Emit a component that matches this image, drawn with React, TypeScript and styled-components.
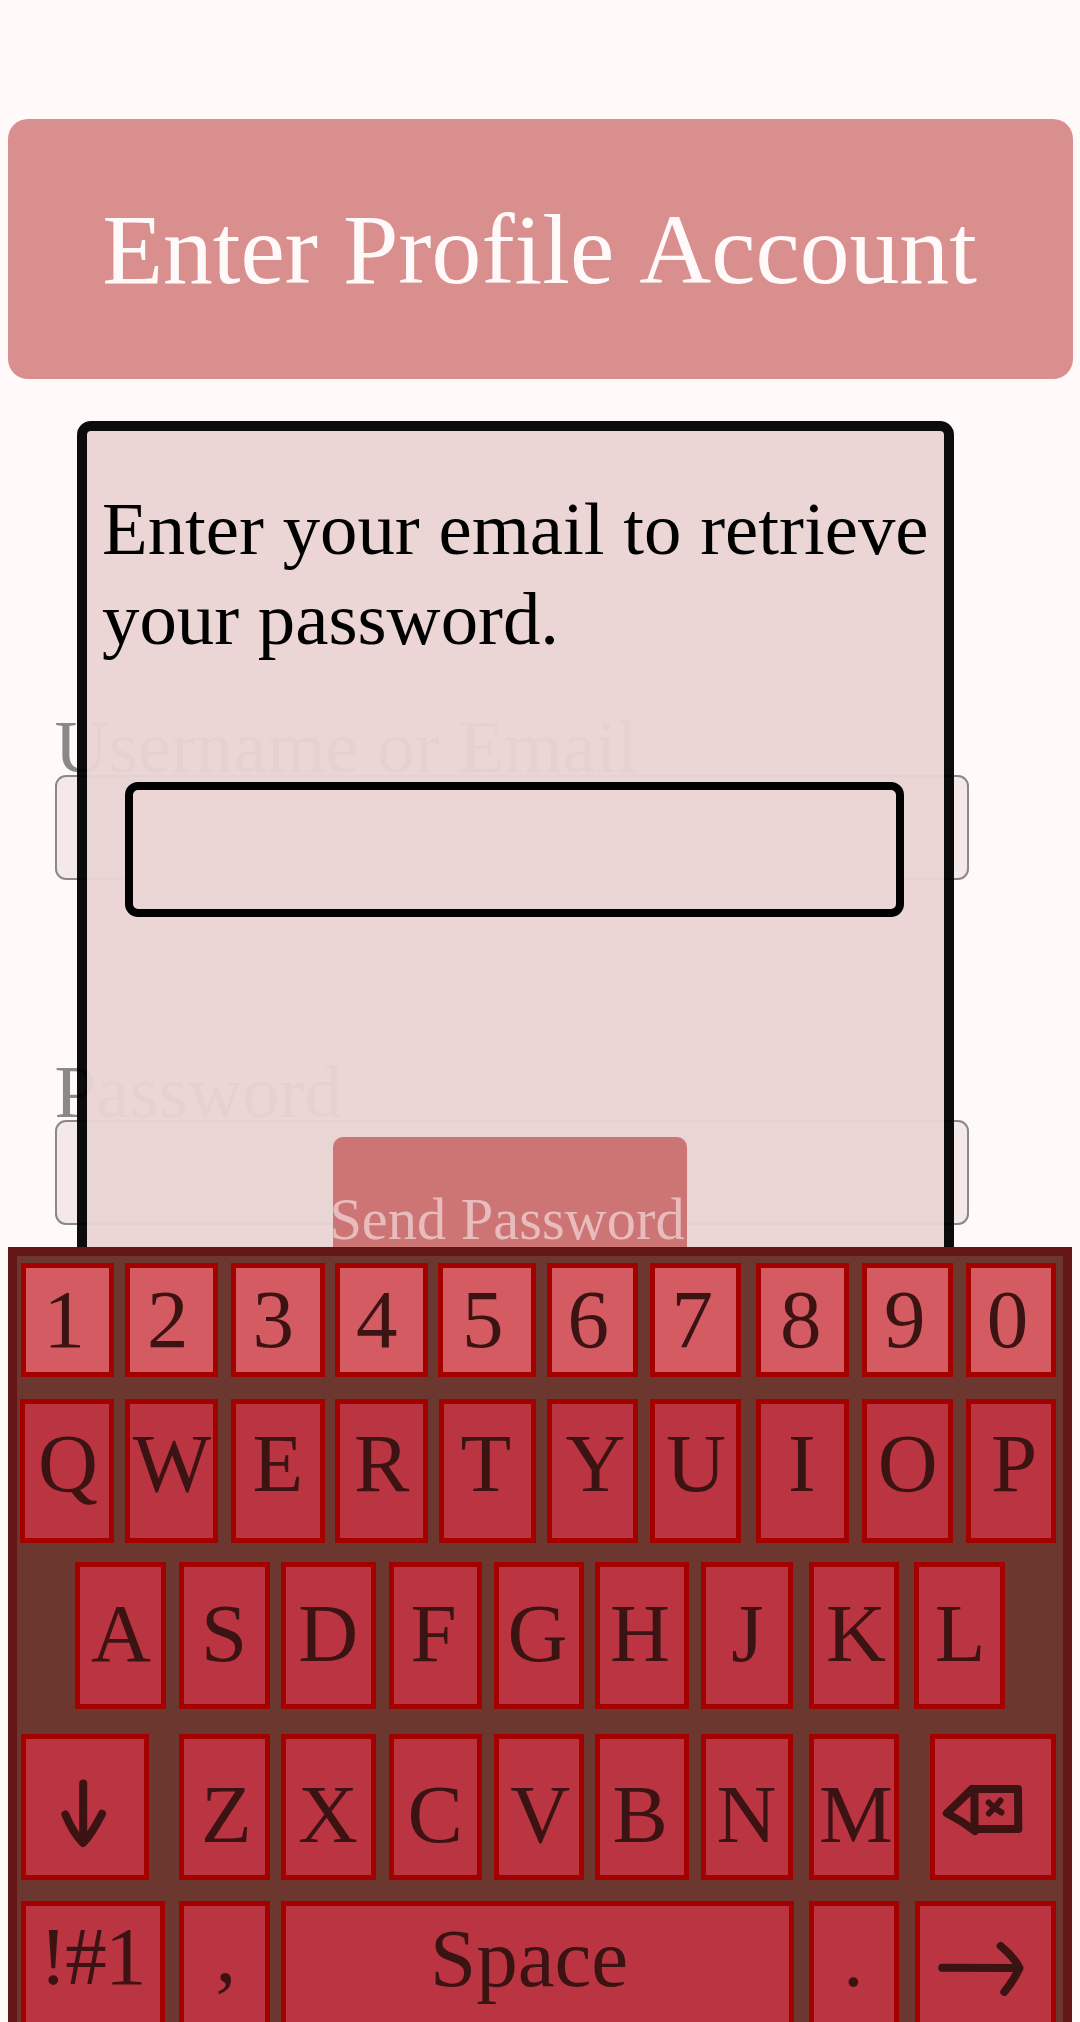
import React from "react";
import styled, { createGlobalStyle } from "styled-components";

const Global = createGlobalStyle`
  body { margin: 0; background: #fff9f9; }
  * { box-sizing: border-box; }
`;

const Screen = styled.div`
  position: relative;
  width: 1080px;
  height: 2022px;
  overflow: hidden;
  padding: 119px 7px 0 8px;
  background: #fff9f9;
  color: #000;
  font-family: "Liberation Serif", "Times New Roman", serif;
  font-kerning: none;
`;

const Header = styled.header`
  display: flex;
  justify-content: center;
  height: 260px;
  padding: 81px 2px 0 0;
  border-radius: 20px;
  background: #d98f8d;
`;

const Title = styled.h1`
  margin: 0;
  font-size: 99.7px;
  font-weight: 400;
  line-height: 100px;
  white-space: nowrap;
  color: #fff9f9;
  font-variant-ligatures: none;
`;

const Form = styled.form`
  display: flex;
  flex-direction: column;
  gap: 174px;
  padding: 330px 0 0 45px;
  opacity: 0.45;
`;

const Field = styled.div`
  display: flex;
  flex-direction: column;
`;

const Label = styled.label`
  height: 66px;
  margin-left: 1.5px;
  font-size: 75px;
  line-height: 75px;
  white-space: nowrap;
`;

const FieldBox = styled.div`
  width: 914px;
  height: 105px;
  margin-left: 2px;
  border: 2px solid #000;
  border-radius: 11px;
  background: #e9d4d4;
`;

const Dialog = styled.section`
  position: absolute;
  left: 77px;
  top: 421px;
  width: 877px;
  height: 900px;
  isolation: isolate;
`;

const DialogSurface = styled.div`
  position: absolute;
  inset: 0;
  z-index: -1;
  border: 10px solid #000;
  border-radius: 14px;
  background: #ead5d4;
  opacity: 0.95;
`;

const DialogBody = styled.div`
  display: flex;
  flex-direction: column;
  align-items: flex-start;
  padding: 63px 0 0 25px;
`;

const Message = styled.p`
  margin: 0;
  font-size: 74.8px;
  line-height: 90px;
  white-space: pre;
`;

const EmailBox = styled.div`
  width: 779px;
  height: 135px;
  margin: 118px 0 0 23px;
  border: 8px solid #000;
  border-radius: 13px;
  background: #ebd6d5;
`;

const SendButton = styled.div`
  display: flex;
  justify-content: center;
  width: 354px;
  height: 160px;
  margin: 220px 0 0 231px;
  padding: 53px 6px 0 0;
  border-radius: 10px;
  background: rgba(197, 91, 91, 0.8);
  color: #e8bcbd;
  font-size: 58.4px;
  line-height: 60px;
  white-space: nowrap;
`;

const Keyboard = styled.div`
  position: absolute;
  left: 8px;
  top: 1247px;
  width: 1064px;
  height: 800px;
  padding-top: 7px;
  border: 9px solid #641516;
  background: #6b372f;
`;

const KeyRow = styled.div<{ $height: number; $after: number }>`
  display: flex;
  height: ${(p) => p.$height}px;
  margin-bottom: ${(p) => p.$after}px;
`;

const KeyCap = styled.div<{ $gap: number; $width: number; $number?: boolean }>`
  flex: none;
  width: ${(p) => p.$width}px;
  margin-left: ${(p) => p.$gap}px;
  border: 5px solid #a40000;
  background: ${(p) => (p.$number ? "#d35b61" : "#bb3442")};
`;

const Glyph = styled.div<{ $x: number; $y: number; $tight?: boolean }>`
  padding: ${(p) => p.$y}px 0 0 ${(p) => p.$x}px;
  color: #3a1312;
  font-size: 83px;
  line-height: 83px;
  letter-spacing: ${(p) => (p.$tight ? "-1.8px" : "0")};
  white-space: nowrap;
`;

const Icon = styled.svg`
  display: block;
  fill: none;
  stroke: #3a1312;
  stroke-width: 8;
  stroke-linecap: round;
  stroke-linejoin: round;
`;

// label, left edge, right edge, text origin, optional text drop
type Key = [string, number, number, number, number?];
type Row = { height: number; after: number; drop: number; number?: boolean; keys: Key[] };

const KEYBOARD_INSET = 17;

const rows: Row[] = [
  {
    height: 114, after: 22, drop: 9.5, number: true,
    keys: [
      ["1", 21, 114, 43.4], ["2", 125, 218, 147], ["3", 231, 325, 252.4], ["4", 335, 428, 356],
      ["5", 438, 536, 462], ["6", 547, 638, 567.4], ["7", 650, 741, 671.4], ["8", 756, 849, 779.9],
      ["9", 862, 953, 884.1], ["0", 966, 1056, 986.8],
    ],
  },
  {
    height: 144, after: 19, drop: 18,
    keys: [
      ["Q", 20, 114, 38], ["W", 125, 218, 132.8], ["E", 231, 325, 252.4], ["R", 335, 428, 354],
      ["T", 439, 536, 460.4], ["Y", 547, 638, 565.4], ["U", 650, 741, 666], ["I", 756, 849, 788],
      ["O", 862, 953, 877.8], ["P", 966, 1056, 991],
    ],
  },
  {
    height: 147, after: 25, drop: 24.5,
    keys: [
      ["A", 75, 166, 91], ["S", 179, 270, 201], ["D", 281, 376, 298.2], ["F", 389, 482, 410.4],
      ["G", 494, 584, 507.6], ["H", 595, 689, 610], ["J", 701, 793, 731.2], ["K", 809, 899, 826],
      ["L", 914, 1005, 934.8],
    ],
  },
  {
    height: 146, after: 21, drop: 34,
    keys: [
      ["shift", 21, 149, 0], ["Z", 179, 270, 201.1], ["X", 281, 376, 298], ["C", 389, 482, 407.6],
      ["V", 494, 584, 510.2], ["B", 595, 689, 612.6], ["N", 701, 793, 716.4], ["M", 809, 899, 819],
      ["backspace", 930, 1056, 0],
    ],
  },
  {
    height: 146, after: 0, drop: 8.5,
    keys: [
      ["!#1", 21, 165, 39.5], [",", 179, 270, 215.6, 6.5], ["Space", 281, 794, 430, 10.5],
      [".", 809, 899, 843, 10.5], ["enter", 915, 1056, 0],
    ],
  },
];

const icons: Record<string, React.ReactNode> = {
  shift: (
    <Icon width="118" height="136" viewBox="26 1739 118 136">
      <path d="M83.2 1783.5V1842M65.4 1814.5Q73 1833 83 1843Q91 1835 102 1813.8" />
    </Icon>
  ),
  backspace: (
    <Icon width="116" height="136" viewBox="935 1739 116 136">
      <path d="M974.5 1789H1018L1018.3 1829H974.5ZM972 1789L946.8 1813.3Q962 1821 975 1831" />
      <path strokeWidth={6} d="M988.7 1802.5Q995 1809 1001.5 1812.5M1000.5 1800.5Q995 1807 989 1813.5" />
    </Icon>
  ),
  enter: (
    <Icon width="131" height="116" viewBox="920 1906 131 116">
      <path d="M942.2 1967.7L1019 1968M1000.7 1946Q1014 1957 1019.5 1968Q1014 1980 1004.3 1992" />
    </Icon>
  ),
};

export default function App() {
  return (
    <Screen>
      <Global />
      <Header>
        <Title>Enter Profile Account</Title>
      </Header>
      <Form>
        {["Username or Email", "Password"].map((name) => (
          <Field key={name}>
            <Label>{name}</Label>
            <FieldBox />
          </Field>
        ))}
      </Form>
      <Dialog>
        <DialogSurface />
        <DialogBody>
          <Message>{"Enter your email to retrieve\nyour password."}</Message>
          <EmailBox />
          <SendButton>Send Password</SendButton>
        </DialogBody>
      </Dialog>
      <Keyboard>
        {rows.map((row, r) => (
          <KeyRow key={r} $height={row.height} $after={row.after}>
            {row.keys.map(([label, left, right, x, drop], i) => (
              <KeyCap
                key={label}
                $gap={left - (i ? row.keys[i - 1][2] : KEYBOARD_INSET)}
                $width={right - left}
                $number={row.number}
              >
                {icons[label] ?? (
                  <Glyph $x={x - left - 5} $y={drop ?? row.drop} $tight={label === "!#1"}>
                    {label}
                  </Glyph>
                )}
              </KeyCap>
            ))}
          </KeyRow>
        ))}
      </Keyboard>
    </Screen>
  );
}
